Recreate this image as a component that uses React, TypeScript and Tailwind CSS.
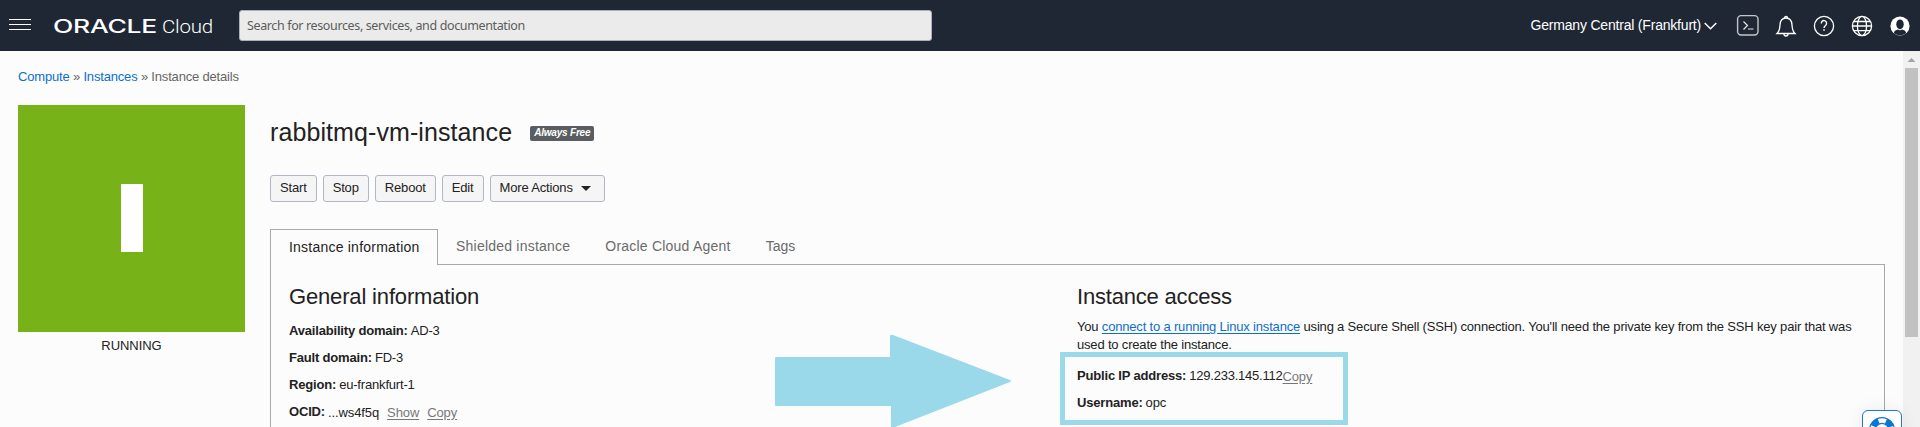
import React from "react";

const SEARCH_PLACEHOLDER = "Search for resources, services, and documentation";

function OracleLogo() {
  return (
    <svg className="ml-[22px] h-[24px] w-[160px]" viewBox="0 0 160 24" fill="#fff">
      <text
        x="0"
        y="19"
        textLength="104"
        lengthAdjust="spacingAndGlyphs"
        className="font-['Inter'] text-[18px] font-medium"
      >
        ORACLE
      </text>
      <text
        x="109"
        y="19"
        textLength="51"
        lengthAdjust="spacingAndGlyphs"
        className="font-['Roboto'] text-[19px] font-light"
      >
        Cloud
      </text>
    </svg>
  );
}

function TerminalIcon() {
  return (
    <svg className="h-6 w-6" viewBox="0 0 24 24" fill="none" stroke="#e4e6e8" strokeWidth="1.2">
      <rect x="1.6" y="1.6" width="20.4" height="19.4" rx="3.5" stroke="#c3c6cb" strokeWidth="1.4" />
      <path d="M7.500 7.500l4 4-4 4M12 15h5.500" />
    </svg>
  );
}

function BellIcon() {
  return (
    <svg className="h-6 w-6" viewBox="0 0 24 24" fill="none" stroke="#fff" strokeWidth="1.3">
      <path d="M3 19.5c2.6-2.4 2.7-4.300 3-8.500C6.300 6.500 8.600 4 12 4s5.700 2.500 6 7c.3 4.200.4 6.100 3 8.500z" />
      <path d="M10.500 4a1.500 1.500 0 013 0M10 20a2 2 0 004 0" />
    </svg>
  );
}

function HelpIcon() {
  return (
    <svg className="h-6 w-6" viewBox="0 0 24 24" fill="none" stroke="#fff" strokeWidth="1.3">
      <circle cx="12" cy="12" r="9.600" />
      <path d="M9.400 9.500a2.600 2.600 0 115 .6c0 1.700-2.400 1.800-2.400 4" strokeWidth="1.400" />
      <path d="M12 15.300v1.500" strokeWidth="1.500" />
    </svg>
  );
}

function GlobeIcon() {
  return (
    <svg className="h-6 w-6" viewBox="0 0 24 24" fill="none" stroke="#fff" strokeWidth="1.3">
      <circle cx="12" cy="12" r="9.600" />
      <ellipse cx="12" cy="12" rx="4.600" ry="9.600" />
      <path d="M2.400 12h19.200M4 7.500h16M4 16.700h16" />
    </svg>
  );
}

function UserIcon() {
  return (
    <svg className="h-6 w-6" viewBox="0 0 24 24">
      <circle cx="12" cy="12" r="9.600" fill="#fff" />
      <ellipse cx="12" cy="10.300" rx="3.700" ry="4.900" fill="#1e2733" />
      <path d="M5.800 19c.5-2.300 2.200-3 4.200-3.500 1.200 1 2.800 1 4 0 2 .5 3.700 1.200 4.200 3.500-3.200 2.900-9.200 2.900-12.400 0z" fill="#1e2733" />
    </svg>
  );
}

function Header() {
  return (
    <header className="flex h-[51px] shrink-0 items-center bg-[#1e2733] text-white">
      <div className="ml-[9px] flex w-[22px] flex-col gap-1 pb-[2px]">
        <span className="h-px bg-white" />
        <span className="h-px bg-white" />
        <span className="h-px bg-white" />
      </div>
      <OracleLogo />
      <div className="ml-[26px] flex h-[31px] w-[693px] items-center rounded-[3px] border border-[#a9b0bf] bg-[#ebebeb] pl-[7px] pt-[2px] font-['Noto_Sans'] text-[12.5px] tracking-[-0.37px] text-[#5c5c5c]">
        {SEARCH_PLACEHOLDER}
      </div>
      <div className="ml-auto flex items-center pr-[8px]">
        <span className="text-[14px] tracking-[-0.2px]">Germany Central (Frankfurt)</span>
        <svg className="ml-[3px] mt-px h-2 w-[13px]" viewBox="0 0 13 8" fill="none" stroke="#fff" strokeWidth="1.500">
          <path d="M.7 1l5.800 5.800L12.300 1" />
        </svg>
        <div className="ml-[19px] flex gap-[14px]">
          <TerminalIcon />
          <BellIcon />
          <HelpIcon />
          <GlobeIcon />
          <UserIcon />
        </div>
      </div>
    </header>
  );
}

function ActionButton({ children }: { children: React.ReactNode }) {
  return (
    <button className="flex h-[27px] items-center rounded-[3px] border border-[#b1b7c3] bg-[#f5f5f5] px-[9px] pb-[2px] text-[13px] tracking-[-0.16px] text-[#222]">
      {children}
    </button>
  );
}

function Field({ label, children }: { label: string; children: React.ReactNode }) {
  return (
    <div className="flex h-[27px] items-center whitespace-nowrap">
      <span className="mr-[3px] font-bold tracking-[-0.18px]">{label}</span>
      {children}
    </div>
  );
}

function MutedLink({ children }: { children: React.ReactNode }) {
  return <a className="text-[#777] underline underline-offset-2">{children}</a>;
}

function Tabs() {
  return (
    <div className="flex h-9 text-[14px] tracking-[0.22px] text-[#6b6b6b]">
      <div className="flex w-[168px] items-center border border-b-0 border-[#a8a8a8] pl-[18px] pb-px text-[#222]">
        Instance information
      </div>
      <div className="flex flex-1 items-center gap-[35px] border-b border-[#a8a8a8] pl-[18px]">
        <span>Shielded instance</span>
        <span>Oracle Cloud Agent</span>
        <span className="tracking-normal">Tags</span>
      </div>
    </div>
  );
}

function Arrow() {
  return (
    <svg className="absolute left-[775px] top-[283px] h-[93px] w-[237px]" viewBox="0 0 237 93" fill="#9ad9ea">
      <path d="M1 23h114V2q0-2 3-1l117 45q2 1 0 2L120 93h-4V72H1q-1 0-1-1V24q0-1 1-1z" />
    </svg>
  );
}

function HelpWidget() {
  return (
    <div className="absolute right-[18px] top-[359px] h-10 w-10 rounded-[6px] border border-[#1b7ad0] bg-white p-[6px] shadow-[0_0_16px_rgba(0,0,0,0.08)]">
      <svg className="h-[26px] w-[26px]" viewBox="0 0 26 26" fill="none">
        <circle cx="13" cy="13" r="9.500" stroke="#0d74d1" strokeWidth="7" />
        <circle cx="13" cy="13" r="9.500" stroke="#fff" strokeWidth="4.600" strokeDasharray="7.460 7.460" strokeDashoffset="-11.200" />
      </svg>
    </div>
  );
}

function Scrollbar() {
  return (
    <div className="flex w-[17px] shrink-0 flex-col items-center bg-[#f1f1f1]">
      <svg className="h-[17px] w-[17px] shrink-0" viewBox="0 0 17 17" fill="#a3a3a3">
        <path d="M4.500 11L8.500 7l4 4z" />
      </svg>
      <div className="h-[269px] w-[13px] bg-[#c1c1c1]" />
    </div>
  );
}

function InstancePanel() {
  return (
    <div className="flex flex-1 border border-y-0 border-[#a8a8a8] pl-[18px] pt-[18px]">
      <section className="w-[788px]">
        <h2 className="text-[22px] leading-7 tracking-[-0.16px]">General information</h2>
        <div className="mt-[6px]">
          <Field label="Availability domain:">AD-3</Field>
          <Field label="Fault domain:">FD-3</Field>
          <Field label="Region:">eu-frankfurt-1</Field>
          <Field label="OCID:">
            <span className="flex gap-[8px] pt-[2px] tracking-[-0.1px]">
              ...ws4f5q <MutedLink>Show</MutedLink>
              <MutedLink>Copy</MutedLink>
            </span>
          </Field>
        </div>
      </section>
      <section className="w-[790px]">
        <h2 className="text-[22px] leading-7 tracking-[-0.19px]">Instance access</h2>
        <p className="mt-[7px] leading-[18px]">
          You <a className="text-[#0d6fcb] underline underline-offset-2">connect to a running Linux instance</a> using a
          Secure Shell (SSH) connection. You'll need the private key from the SSH key pair that was
          <br />
          used to create the instance.
        </p>
        <div className="-mt-[2px] -ml-[17px] h-[73px] w-[288px] border-[5px] border-[#9ad9ea] pl-3 pt-[5px]">
          <Field label="Public IP address:">
            <span className="tracking-[-0.22px]">129.233.145.112</span>
            <span className="pt-[2px] tracking-[-0.18px]">
              <MutedLink>Copy</MutedLink>
            </span>
          </Field>
          <Field label="Username:">opc</Field>
        </div>
      </section>
    </div>
  );
}

export default function App() {
  return (
    <div className="flex h-[427px] w-[1920px] flex-col overflow-hidden bg-[#fcfcfc] font-['Liberation_Sans',Arial,sans-serif] text-[13px] tracking-[-0.18px] text-[#222]">
      <Header />
      <div className="relative flex min-h-0 flex-1">
        <main className="flex flex-1 flex-col pl-[18px] pr-[18px]">
          <nav className="pt-[16px] leading-5 text-[#666]">
            <a className="text-[#0d6fcb]">Compute</a> » <a className="text-[#0d6fcb]">Instances</a> » Instance details
          </nav>
          <div className="flex flex-1 pt-[18px]">
            <aside className="flex w-[227px] shrink-0 flex-col items-center">
              <div className="flex h-[227px] w-full items-center justify-center bg-[#77b318] pb-[2px]">
                <div className="h-[68px] w-[22px] bg-white" />
              </div>
              <span className="mt-1 leading-5 tracking-[-0.05px]">RUNNING</span>
            </aside>
            <div className="ml-[25px] flex flex-1 flex-col pt-[9px]">
              <div className="flex items-center">
                <h1 className="text-[25px] leading-9 tracking-[0.09px]">rabbitmq-vm-instance</h1>
                <span className="ml-[18px] mt-[2px] flex h-[15px] items-center rounded-[2px] bg-[#5a5d61] px-[4px] pb-px text-[10px] font-bold italic tracking-[-0.2px] text-white">
                  Always Free
                </span>
              </div>
              <div className="mt-[25px] flex gap-[6px]">
                <ActionButton>Start</ActionButton>
                <ActionButton>Stop</ActionButton>
                <ActionButton>Reboot</ActionButton>
                <ActionButton>Edit</ActionButton>
                <ActionButton>
                  More Actions
                  <svg className="ml-2 mr-1 mt-[2px] h-[5px] w-[10px]" viewBox="0 0 10 5" fill="#222">
                    <path d="M0 0h10L5 5z" />
                  </svg>
                </ActionButton>
              </div>
              <div className="mt-[27px] flex flex-1 flex-col">
                <Tabs />
                <InstancePanel />
              </div>
            </div>
          </div>
        </main>
        <Scrollbar />
        <Arrow />
        <HelpWidget />
      </div>
    </div>
  );
}
